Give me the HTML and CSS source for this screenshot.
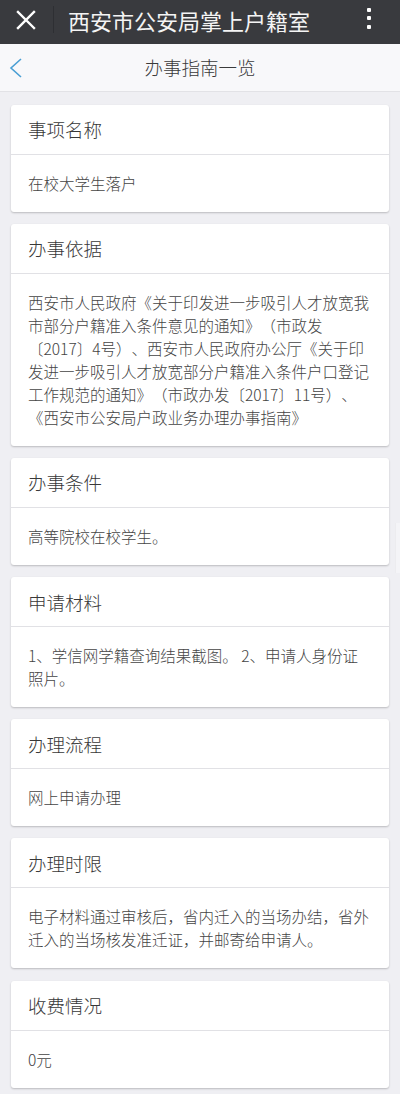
FILE: index.html
```html
<!DOCTYPE html>
<html lang="zh-CN">
<head>
<meta charset="utf-8">
<title>办事指南一览</title>
<link rel="stylesheet" href="styles.css">
</head>
<body>
<header class="topbar">
  <span class="close">
    <svg width="20" height="20" viewBox="0 0 20 20"><path d="M2 2 L18 18 M18 2 L2 18" stroke="#fff" stroke-width="2.4" stroke-linecap="square" fill="none"/></svg>
  </span>
  <span class="divider"></span>
  <span class="top-title">西安市公安局掌上户籍室</span>
  <span class="more"><i></i><i></i><i></i></span>
</header>
<nav class="navbar">
  <span class="back">
    <svg width="16" height="22" viewBox="0 0 16 22"><path d="M13 2 L3 11 L13 20" stroke="#4a9fd4" stroke-width="1.6" fill="none"/></svg>
  </span>
  <span class="nav-title">办事指南一览</span>
</nav>
<main class="list">
  <section class="card"><h2 class="card-head">事项名称</h2><div class="card-body">在校大学生落户</div></section>
  <section class="card"><h2 class="card-head">办事依据</h2><div class="card-body">西安市人民政府《关于印发进一步吸引人才放宽我市部分户籍准入条件意见的通知》（市政发〔2017〕4号）、西安市人民政府办公厅《关于印发进一步吸引人才放宽部分户籍准入条件户口登记工作规范的通知》（市政办发〔2017〕11号）、《西安市公安局户政业务办理办事指南》</div></section>
  <section class="card"><h2 class="card-head">办事条件</h2><div class="card-body">高等院校在校学生。</div></section>
  <section class="card"><h2 class="card-head">申请材料</h2><div class="card-body">1、学信网学籍查询结果截图。 2、申请人身份证照片。</div></section>
  <section class="card"><h2 class="card-head">办理流程</h2><div class="card-body">网上申请办理</div></section>
  <section class="card"><h2 class="card-head">办理时限</h2><div class="card-body">电子材料通过审核后，省内迁入的当场办结，省外迁入的当场核发准迁证，并邮寄给申请人。</div></section>
  <section class="card"><h2 class="card-head">收费情况</h2><div class="card-body">0元</div></section>
</main>
<div class="scroll-thumb"></div>
</body>
</html>
```
FILE: styles.css
```css
html, body {
  margin: 0;
  padding: 0;
  overflow: hidden;
}
body {
  background: #efeff3;
  font-family: "Noto Sans CJK SC", "Noto Sans", Roboto, sans-serif;
  font-weight: 300;
  text-spacing-trim: space-all;
  font-feature-settings: "halt" 0, "chws" 0;
  color: #333;
  position: relative;
  min-height: 1094px;
}
.topbar {
  height: 44px;
  background: #393a3e;
  display: flex;
  align-items: center;
  color: #fff;
}
.close {
  width: 20px;
  height: 20px;
  margin-left: 16px;
  margin-top: -4px;
  display: flex;
}
.divider {
  width: 1px;
  height: 27px;
  background: #2e2f33;
  margin-left: 17px;
  margin-top: -6px;
}
.top-title {
  margin-left: 14px;
  font-size: 22px;
  font-weight: 400;
  line-height: 30px;
  margin-top: -4px;
  color: #f4f4f4;
}
.more {
  margin-left: auto;
  margin-right: 29px;
  margin-top: -8px;
  display: flex;
  flex-direction: column;
  gap: 4.5px;
}
.more i {
  display: block;
  width: 4px;
  height: 4px;
  background: #fff;
  border-radius: 1px;
}
.navbar {
  height: 47px;
  background: #f8f8fa;
  border-bottom: 1px solid #e2e2e6;
  display: flex;
  align-items: center;
  justify-content: center;
  position: relative;
}
.back {
  position: absolute;
  left: 8px;
  top: 13px;
  display: flex;
}
.nav-title {
  font-size: 18.5px;
  color: #3a3a3a;
  margin-top: -2px;
}
.list {
  padding: 12.5px 11px 12px 11px;
  display: flex;
  flex-direction: column;
  gap: 12.2px;
}
.card {
  background: #fff;
  border-radius: 3px;
  box-shadow: 0 1px 2px rgba(0, 0, 0, 0.22);
}
.card-head {
  margin: 0;
  box-sizing: border-box;
  height: 50px;
  border-bottom: 1px solid #e1e1e5;
  padding: 0 17px;
  display: flex;
  align-items: center;
  font-size: 18.5px;
  font-weight: 300;
  color: #383838;
}
.card-body {
  padding: 17px 17px 17px 17px;
  font-size: 15.5px;
  line-height: 23px;
  color: #444;
}
.scroll-thumb {
  position: absolute;
  right: 0;
  top: 523px;
  width: 4px;
  height: 50px;
  background: rgba(255, 255, 255, 0.35);
  border-left: 1px solid rgba(0, 0, 0, 0.03);
}
```
